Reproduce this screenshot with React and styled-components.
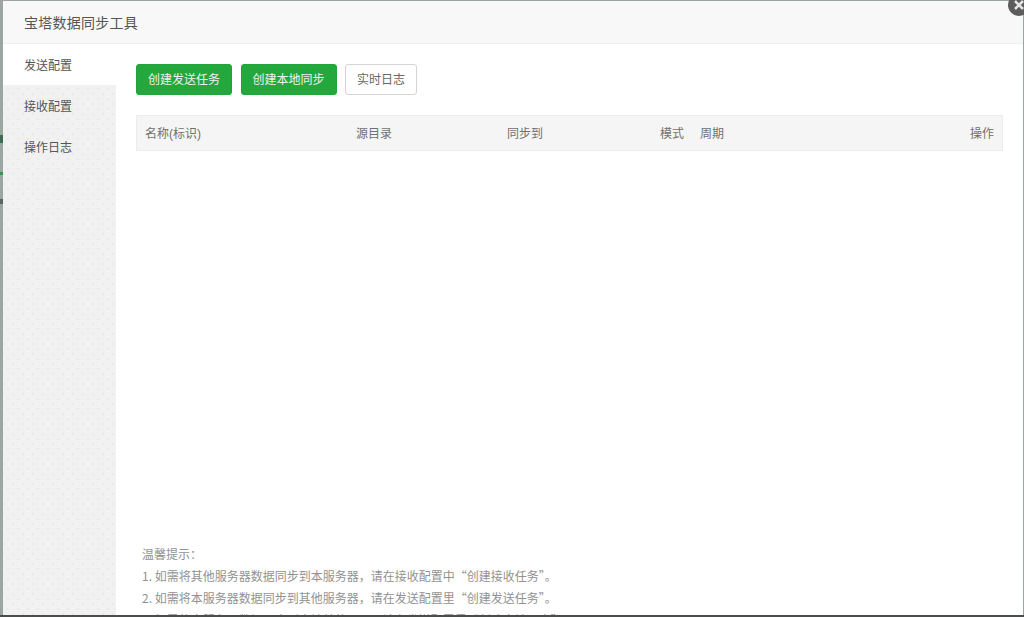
import React from 'react';
import styled, { createGlobalStyle } from 'styled-components';

const GlobalStyle = createGlobalStyle`
  html, body {
    margin: 0;
    height: 100%;
    overflow: hidden;
    background: #9ca5a0;
    font-family: "Liberation Sans", "Noto Sans CJK SC", sans-serif;
  }
  #root { height: 100%; }
`;

const Backdrop = styled.div`
  position: relative;
  height: 617px;
  padding: 1px 1px 2px 3px;
  box-sizing: border-box;
  overflow: hidden;
  background: #9ca5a0;
  &::after {
    content: '';
    position: absolute;
    left: 0;
    right: 0;
    bottom: 0;
    height: 2px;
    background: #4a4d4c;
  }
`;

// bits of the page behind the overlay that show in the left strip
const BehindMark = styled.span`
  position: absolute;
  left: 0;
  top: ${({ $top }) => $top}px;
  width: 3px;
  height: ${({ $h }) => $h}px;
  background: ${({ $color }) => $color};
`;

const Modal = styled.div`
  display: flex;
  flex-direction: column;
  height: 100%;
  background: #fff;
  overflow: hidden;
`;

const Title = styled.div`
  flex: none;
  height: 43px;
  padding-left: 21px;
  line-height: 44px;
  font-size: 14px;
  letter-spacing: 0.25px;
  color: #555;
  background: #f8f8f8;
  border-bottom: 1px solid #f0f0f0;
  box-sizing: border-box;
`;

const Body = styled.div`
  flex: 1;
  display: flex;
  min-height: 0;
`;

const Side = styled.div`
  flex: none;
  width: 113px;
  background-color: #f1f1f1;
  background-image:
    radial-gradient(#dadada 0.5px, transparent 0.8px),
    radial-gradient(#dadada 0.5px, transparent 0.8px);
  background-size: 10px 10px;
  background-position: 0 0, 5px 5px;
`;

const Tab = styled.div`
  height: 41px;
  padding-left: 21px;
  line-height: 44px;
  font-size: 12px;
  color: #555;
  background: ${({ $active }) => ($active ? '#fff' : 'transparent')};
`;

const Main = styled.div`
  flex: 1;
  display: flex;
  flex-direction: column;
  min-width: 0;
  padding: 20px 20px 0;
  overflow: hidden;
`;

const Toolbar = styled.div`
  display: flex;
  gap: 8.5px;
  flex: none;
`;

const Button = styled.div`
  height: 31px;
  padding: 0 11px;
  line-height: 31px;
  font-size: 12px;
  border-radius: 3px;
  box-sizing: border-box;
  border: 1px solid ${({ $primary }) => ($primary ? '#20a53a' : '#d4d4d4')};
  background: ${({ $primary }) => ($primary ? '#24a83e' : '#fff')};
  color: ${({ $primary }) => ($primary ? '#f0f0f0' : '#666')};
`;

const TableHead = styled.div`
  flex: none;
  display: grid;
  grid-template-columns: 211px 151px 152px 41px 1fr auto;
  align-items: center;
  height: 36px;
  margin-top: 20px;
  padding: 0 8px 2px;
  box-sizing: border-box;
  font-size: 12px;
  color: #707070;
  background: #f5f5f5;
  border: 1px solid #ececec;
`;

const HeadCell = styled.span`
  text-align: ${({ $right }) => ($right ? 'right' : 'left')};
  padding-right: ${({ $pad }) => ($pad ? '16px' : '0')};
`;

const TableBody = styled.div`
  flex: none;
  height: 392px;
`;

const Tips = styled.ul`
  flex: none;
  margin: 0;
  padding: 0 0 0 6px;
  list-style: none;
  font-family: "Noto Sans CJK SC", "Liberation Sans", sans-serif;
  font-size: 12px;
  color: #929292;
`;

const Tip = styled.li`
  height: 22px;
  line-height: 22px;
  white-space: nowrap;
`;

const Close = styled.div`
  position: absolute;
  top: -6px;
  right: -6px;
  width: 22px;
  height: 22px;
  border-radius: 50%;
  background: #5c5c5c;
  svg { display: block; }
`;

export default function App() {
  return (
    <>
      <GlobalStyle />
      <Backdrop>
        <BehindMark $top={135} $h={8} $color="#3f6b52" />
        <BehindMark $top={172} $h={3} $color="#2f9a50" />
        <BehindMark $top={199} $h={5} $color="#5d6562" />
        <Modal>
          <Title>宝塔数据同步工具</Title>
          <Body>
            <Side>
              <Tab $active>发送配置</Tab>
              <Tab>接收配置</Tab>
              <Tab>操作日志</Tab>
            </Side>
            <Main>
              <Toolbar>
                <Button $primary>创建发送任务</Button>
                <Button $primary>创建本地同步</Button>
                <Button>实时日志</Button>
              </Toolbar>
              <TableHead>
                <HeadCell>名称(标识)</HeadCell>
                <HeadCell>源目录</HeadCell>
                <HeadCell>同步到</HeadCell>
                <HeadCell $right $pad>模式</HeadCell>
                <HeadCell>周期</HeadCell>
                <HeadCell $right>操作</HeadCell>
              </TableHead>
              <TableBody />
              <Tips>
                <Tip>温馨提示：</Tip>
                <Tip>1. 如需将其他服务器数据同步到本服务器，请在接收配置中“创建接收任务”。</Tip>
                <Tip>2. 如需将本服务器数据同步到其他服务器，请在发送配置里“创建发送任务”。</Tip>
                <Tip>3. 如需将本服务器数据同步到本地其他目录，请在发送配置里“创建本地同步”。</Tip>
              </Tips>
            </Main>
          </Body>
        </Modal>
        <Close>
          <svg width="22" height="22" viewBox="0 0 22 22">
            <path d="M7 7l8 8M15 7l-8 8" stroke="#e4e4e4" strokeWidth="2.5" />
          </svg>
        </Close>
      </Backdrop>
    </>
  );
}
